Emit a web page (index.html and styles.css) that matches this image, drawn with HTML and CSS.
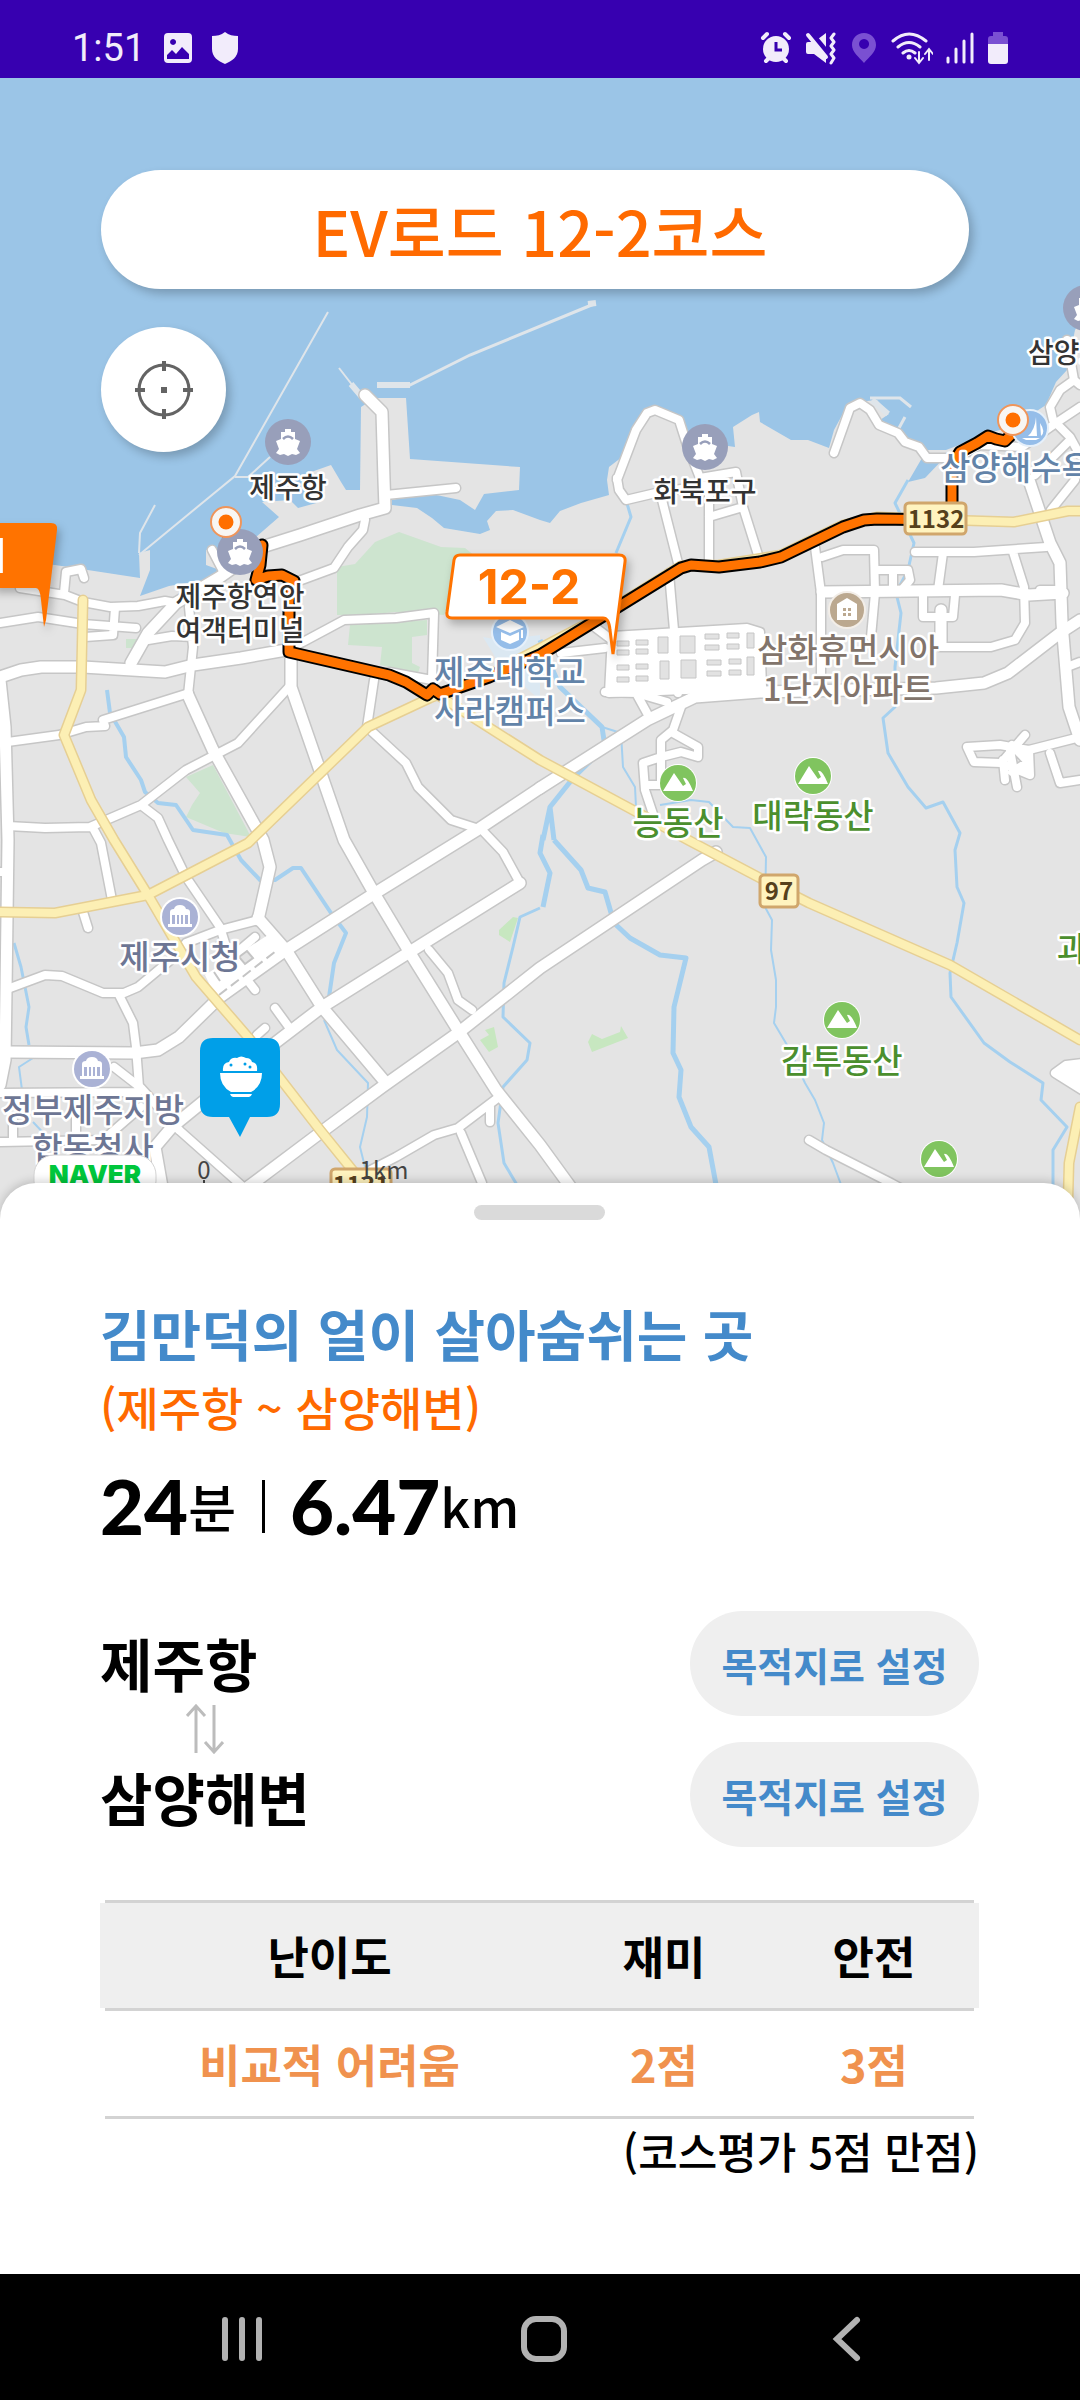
FILE: index.html
```html
<!DOCTYPE html>
<html lang="ko">
<head>
<meta charset="utf-8">
<meta name="viewport" content="width=device-width, initial-scale=1">
<title>EV로드 12-2코스</title>
<link rel="stylesheet" href="styles.css">
</head>
<body>
<div class="status-bar">
  <div class="status-group status-left">
    <span class="clock">1:51</span>
    <svg width="30" height="32" viewBox="0 0 30 32"><path fill="currentColor" fill-rule="evenodd" d="M5 1h20a4 4 0 0 1 4 4v22a4 4 0 0 1-4 4H5a4 4 0 0 1-4-4V5a4 4 0 0 1 4-4zM4 27h22v-5l-7-7-6 7-4-4-5 5zM10 7a3 3 0 1 0 .1 0z"/></svg>
    <svg width="28" height="34" viewBox="0 0 28 34"><path fill="currentColor" d="M14 1c4 3 8 4 13 4v13c0 8-6 12-13 15C7 30 1 26 1 18V5c5 0 9-1 13-4z"/></svg>
  </div>
  <div class="status-group status-right">
    <svg width="32" height="34" viewBox="0 0 32 34"><circle cx="16" cy="18" r="13" fill="currentColor"/><g fill="none" stroke="currentColor" stroke-width="4" stroke-linecap="round"><path d="M3 7l4-4M29 7l-4-4M6 30l4-4M26 30l-4-4"/></g><path d="M16 11v8h6" fill="none" stroke="#3700b0" stroke-width="3"/></svg>
    <svg width="32" height="34" viewBox="0 0 32 34"><path fill="currentColor" d="M3 11h6L21 2v30L9 23H3q-2 0-2-2v-8q0-2 2-2z"/><path d="M5 2l19 23" stroke="#3700b0" stroke-width="7"/><path d="M3 4l18 22" stroke="currentColor" stroke-width="4" stroke-linecap="round"/><path d="M29 3l-3 4 3 4-3 4 3 4-3 4 3 4-3 5" fill="none" stroke="currentColor" stroke-width="3" stroke-linejoin="round" stroke-linecap="round"/></svg>
    <svg width="28" height="34" viewBox="0 0 28 34"><path fill="#7a50d2" fill-rule="evenodd" d="M14 2c7 0 12 5 12 12 0 7-7 12-12 18C9 26 2 21 2 14 2 7 7 2 14 2zM14 8a5 5 0 1 0 .1 0z"/></svg>
    <svg width="42" height="34" viewBox="0 0 42 34"><g fill="none" stroke="currentColor" stroke-width="3" stroke-linecap="round"><path d="M2 10q16-14 33 0M7 16q11-9 22 0M12 22q6-5 12 0"/><path d="M28 21v10M24 27l4 5 4-5M38 29V19M34 23l4-5 4 5" stroke-width="2"/></g><circle cx="18" cy="26" r="2.500" fill="currentColor"/></svg>
    <svg width="28" height="32" viewBox="0 0 28 32"><path d="M2 26v4M10 17v13M18 9v21M26 2v28" stroke="currentColor" stroke-width="3" stroke-linecap="round"/></svg>
    <svg width="22" height="34" viewBox="0 0 22 34"><path fill="#7a50d2" d="M6 1h10v4h2q3 0 3 3v7H1V8q0-3 3-3h2z"/><path fill="currentColor" d="M1 13h20v17q0 3-3 3H4q-3 0-3-3z"/></svg>
  </div>
</div>

<main class="screen">
<section class="map-area" aria-label="지도">
<svg class="map" viewBox="0 78 1080 1147">
  <defs>
    <g id="roads-wide">
      <path d="M365 395L382 412 384 480 385 508 360 515 300 535 262 547 220 577 176 603 148 633 131 663"/>
      <path d="M0 677L21 670 41 667 83 667 165 672 193 665 241 658 286 650"/>
      <path d="M0 680L5 727 8 840 6 990 5 1060 0 1085"/>
      <path d="M188 695L213 750 263 840 270 867 258 920M291 653V687L344 840 374 893 410 953 458 1030 496 1090 540 1145 580 1200"/>
      <path d="M540 788L477 830 372 895 286 950 220 997 179 1037 158 1050 134 1053 8 1052"/>
      <path d="M540 788L647 720 695 697 760 692 936 688 984 683 1008 673 1060 633 1080 620"/>
      <path d="M716 852L702 860 540 968 458 1033 382 1087 320 1133 248 1187 230 1200"/>
      <path d="M258 918L286 950 322 1007 386 1083M520 883L424 943 322 1007 275 1043 172 1127 155 1147 162 1187"/>
      <path d="M1029 480L1050 543 1060 563 1062 623 1069 707 1080 740M822 592L1001 590 1029 595 1063 593M941 610V645"/>
    </g>
    <g id="roads-mid">
      <path d="M20 588L65 595 83 602 110 607 138 606 165 601 176 603M64 593L66 572 81 569 84 578"/>
      <path d="M0 623L38 617 83 624 136 628M115 608L113 635 85 637M148 640L172 636 193 637M189 607L193 647 188 695"/>
      <path d="M286 650L303 642 344 620 396 618 434 613 432 680 389 672M0 743L59 735 86 727 105 726 103 720 189 693"/>
      <path d="M289 687L238 743 186 770 141 805 90 827 45 828 8 826M141 805L158 818 168 840 186 877 220 927 225 943M93 828L101 843 112 900M83 912L88 928"/>
      <path d="M374 680L367 727 406 763 418 787 451 820 482 830 503 852 520 883"/>
      <path d="M119 995L133 1023 136 1047 139 1087M10 988L45 975 62 976 103 993 124 993 138 987 179 953 186 943 220 930 258 920"/>
      <path d="M179 1130L241 1185 255 1198M499 1097L458 1128 434 1135 396 1157 365 1173M461 1133L482 1183M490 1107V1122M429 950L448 973 458 1000 472 1010"/>
      <path d="M114 1067L141 1088 179 1130M0 1142L103 1140 141 1107M0 1093L138 1092M13 1140V1120M76 1100V1140M275 1008L291 1030M257 1035L265 1028M255 937L222 965M0 872H8M220 945L255 990"/>
      <path d="M386 495L456 488M365 520L363 530 348 547 334 568 296 582M212 550L224 573"/>
      <path d="M617 480L636 430 647 413 655 410 679 420 687 445 700 478 736 472 743 507 759 558M617 478L619 490 626 500 660 492 709 485V560M709 517L743 507M660 492L679 567M669 573L674 630 678 693"/>
      <path d="M561 653L605 648M592 625L612 640M605 692L636 693 667 702M636 693L647 713M681 707L673 730 661 740V757L643 763 645 790 654 817M673 733L698 747V757L681 752 661 757M645 785H661V757"/>
      <path d="M815 547L821 593V677M822 557L843 550H874L875 593 871 637M876 570H908L910 580 900 592M893 570V592M915 552H974L1046 547M943 553L938 590M923 595V617H953L955 595M1013 552L1024 587 1025 623 1015 640 991 647H940M1075 480L1051 510M1067 667L1080 662M1040 590H1060"/>
      <path d="M1080 737L1029 750 1000 745 967 747 974 762 1001 763 1025 735M1029 750L1030 775 1001 763M1017 787L1010 750M1005 780L1003 760M1050 753L1060 783 1080 780M1012 745L1028 762 1012 772"/>
      <path d="M834 453L850 408 860 403 870 410 879 425 898 433 905 442 919 447 927 458 957 458 980 445 1022 447 1056 423 1080 407M1067 340L1074 380 1060 390 1050 407 1053 420 1070 437 1080 455M1050 460L1070 440M1035 475L1050 460M1074 380L1080 385"/>
      <path d="M809 1140L826 1150 891 1183 915 1196"/>
    </g>
    <g id="roads-national">
      <path d="M83 600L81 690 64 735 91 800 114 840 148 895 196 977 248 1037 320 1130 358 1177"/>
      <path d="M0 912L55 913 148 895 248 843 368 727 430 698 489 675 592 621 681 566 719 565 781 555 843 525 877 517 950 520 1014 522 1068 511 1080 511"/>
      <path d="M430 690L540 760 657 823 688 840 760 878 809 903 950 965 1080 1040M1080 1107L1069 1163 1068 1200"/>
    </g>
    <path id="route" d="M226 530L240 560 262 545 260 565 256 580 268 576 282 575 294 581 289 600V652L389 675 406 682 427 695 433 689 440 694 489 677 540 655 592 623 681 568 691 565 719 567 760 562 781 557 843 527 864 520 877 519 952 520V465L960 452 977 443 988 436 996 439 1005 441 1013 433"/>
    <g id="icon-ship">
      <circle r="23" fill="#989fba"/>
      <path fill="#fff" d="M-3-10v-3h6v3h4v7l5 2-3 8 3 4-4 2-4-1-4 2-4-2-4 1-4-2 3-4-3-8 5-2v-7z"/>
      <path d="M-5-3q5-5 10 0" fill="none" stroke="#989fba" stroke-width="2.500"/>
    </g>
    <g id="icon-hill">
      <circle r="19" fill="#fff"/><circle r="18" fill="#80c45f"/>
      <path fill="#fff" d="M-15 8L-4-10 5 3 8 1 5-5Q9-7 15 8z"/>
    </g>
    <g id="icon-hall">
      <circle r="20" fill="#fff"/><circle r="18" fill="#aab2d5"/>
      <path fill="#fff" d="M-10-5q0-3 4-3 1-4 6-4t6 4q4 0 4 3v3h-20zM-12 7h24v3h-24z"/>
      <path d="M-9-3V8M-4-3V8M0-3V8M4-3V8M9-3V8" stroke="#fff" stroke-width="2"/>
    </g>
    <g id="icon-endpoint">
      <circle r="15" fill="#f8f6f3" stroke="#f0955a" stroke-width="2"/><circle r="7.500" fill="#ff6f00"/>
    </g>
  </defs>

  <rect y="78" width="1080" height="1147" fill="#9bc5e7"/>
  <path fill="#e4e4e4" d="M0 560L55 565 140 578 139 553 150 550V570L140 596 169 586 206 580 225 572 206 565V550L228 547 256 537 279 517 262 502 290 500 298 508 320 502 300 476 331 465 341 482 346 490H360L361 407 375 398H406L410 459 520 467 519 490 484 494 475 510 460 500 427 493 392 500V505L417 508 432 518 444 528 480 534 490 530 487 521 496 511 513 510 540 520 550 523 560 511 581 503 609 495 607 480 609 467 622 457 630 440 647 413 680 420 687 440 735 447 733 427 752 415 759 412 760 422 791 440 808 440 829 448 834 430 846 408 857 402 877 400 889 414 880 420 898 428 905 440 922 450 946 450 967 442 988 433 1012 427 1046 405 1056 382 1067 370 1075 330 1080 322V1225H0z"/>
  <g fill="none" stroke="#dfe5ea" stroke-width="2">
    <path d="M328 312L235 476 139 555M270 457L248 477H235M155 505L140 533 139 553M339 368L360 395"/>
    <path d="M377 386H408L470 355 594 304M870 398H900L911 407M905 417L899 428" stroke-width="3"/>
    <path d="M351 384L362 397M377 385H410M588 304L596 303M872 400L888 414" stroke-width="6"/>
  </g>
  <path fill="#9bc5e7" d="M922 458L946 456 925 478 908 482z"/>

  <g fill="#cde4cf">
    <path d="M337 567L355 564 375 542 399 532 441 547 465 548 480 560 444 615 396 612 362 615H337zM350 625L427 620V635L412 637V663L420 667 418 673 380 665 382 647 348 645zM186 777L213 765 251 837 224 833 186 817 192 805 200 793zM126 639h12v9h-12z"/>
    <path fill="#c7e7c0" d="M499 930L513 917 518 918 510 942 499 935zM480 1040L489 1035 485 1030 494 1027 498 1047 489 1052zM588 1042L592 1034 602 1039 620 1032 621 1026 628 1038 592 1052z"/>
  </g>
  <path fill="#dbe8f2" d="M483 637L500 640 540 635V700L500 665z"/>

  <g fill="none" stroke="#a5d0ef" stroke-linejoin="round">
    <path stroke-width="3" d="M626 500L631 517 616 553M908 480L895 503 914 543 908 570 896 593 901 613 895 667V707L883 718 888 753 908 787 926 808 943 802 960 833 955 850 957 887 964 903 957 943 950 973 951 997 984 1043 1010 1062 1043 1083 1041 1100 1067 1127 1053 1150V1190"/>
    <path stroke-width="5" d="M540 640L560 687 602 727 605 747 574 777 550 807 543 840M554 840L581 870 588 888 605 892 614 923 630 938 660 955 686 958 674 1007 673 1053 681 1070 679 1097 691 1127 709 1147 717 1190M543 835L540 853 550 873 543 907M550 807L554 840"/>
    <path stroke-width="2" d="M602 727L621 733 623 767 635 787 636 807M660 805L691 800 709 802 733 827 750 828 766 857 765 907 772 920 771 950 776 980V1007L774 1023 790 1050 805 1083 815 1100 824 1123 822 1140 833 1163 843 1190"/>
    <path stroke-width="4" d="M107 690L110 713 124 737 126 757 141 780 145 792 158 803 176 805 193 830 227 835 241 860 260 880 275 880 293 868 301 868 331 913 346 933 334 963 329 997"/>
    <path stroke-width="2" d="M324 1020L337 1050 368 1083 367 1117 360 1147 365 1167M33 1058L19 1067 22 1090M33 1122L50 1140"/>
    <path stroke-width="3" d="M14 943L21 967 29 1007 26 1027 29 1045M540 908L520 917 513 947 504 983 503 1017 530 1043 527 1060 503 1087 498 1123 504 1163 520 1190"/>
  </g>

  <g fill="none" stroke-linecap="round" stroke-linejoin="round">
    <use href="#roads-mid" class="road-mid-edge"/>
    <use href="#roads-wide" class="road-wide-edge"/>
    <path class="road-mid-edge" fill="#fff" d="M612 636L747 628 760 632 762 687 609 693z"/>
    <path class="road-mid-edge" fill="#fff" d="M1055 1073L1066 1065 1090 1062V1095z"/>
    <use href="#roads-mid" class="road-mid"/>
    <use href="#roads-wide" class="road-wide"/>
    <path class="road-mid" fill="#fff" d="M612 636L747 628 760 632 762 687 609 693zM1055 1073L1066 1065 1090 1062V1095z"/>
  </g>
  <path fill="#e2e2e2" stroke="#c6c6c6" d="M617 641h12v5h-12zM636 640h12v5h-12zM617 650h12v5h-12zM636 649h12v5h-12zM617 665h12v5h-12zM636 664h12v5h-12zM617 677h12v5h-12zM636 676h12v5h-12zM658 637h10v16h-10zM680 636h15v17h-15zM660 661h9v18h-9zM681 660h15v18h-15zM705 634h14v5h-14zM727 633h12v5h-12zM705 645h14v5h-14zM727 644h12v5h-12zM707 660h14v5h-14zM729 659h12v5h-12zM707 671h14v5h-14zM729 670h12v5h-12zM747 633h7v15h-7zM747 657h7v18h-7z"/>
  <path fill="#fff" d="M205 975L268 935 282 952 218 1002z"/>
  <path d="M219 995L276 951" stroke="#c4c4c4" stroke-width="2" stroke-dasharray="10 5"/>
  <path d="M239 957l8-6 6 7-8 6zM214 972l6 9" fill="#e4e4e4" stroke="#c4c4c4" stroke-width="2"/>
  <g fill="none" stroke-linecap="round" stroke-linejoin="round">
    <use href="#roads-national" stroke="#e6cf93" stroke-width="11"/>
    <use href="#roads-national" stroke="#fcefb4" stroke-width="8"/>
    <use href="#route" stroke="#000" stroke-width="13"/>
    <use href="#route" stroke="#ff7300" stroke-width="9"/>
  </g>

  <use href="#icon-ship" x="288" y="442"/>
  <use href="#icon-ship" x="240" y="552"/>
  <use href="#icon-ship" x="705" y="447"/>
  <use href="#icon-ship" x="1086" y="308"/>
  <use href="#icon-hill" x="678" y="783"/>
  <use href="#icon-hill" x="813" y="776"/>
  <use href="#icon-hill" x="842" y="1020"/>
  <use href="#icon-hill" x="939" y="1159"/>
  <use href="#icon-hall" x="180" y="917"/>
  <use href="#icon-hall" x="92" y="1069"/>
  <circle cx="1030" cy="428" r="18" fill="#95bde9" stroke="#e6f0fa" stroke-width="2"/>
  <path fill="#fff" d="M1036 417l1 19h-9q7-6 8-19zM1040 423q6 9 1 13zM1022 438h18l-4 2h-10z"/>
  <circle cx="510" cy="632" r="18" fill="#95bde9" stroke="#e6f0fa" stroke-width="2"/>
  <path fill="#fff" d="M510 620l14 7-14 6-14-6zM501 632l9 4 9-4v8l-9 4-9-4zM521 630h2v8h-2z"/>
  <circle cx="847" cy="610" r="18" fill="#bba88f" stroke="#f3eee8" stroke-width="2"/>
  <path fill="#fff" d="M847 598l10 6v16h-20v-16z"/>
  <path fill="#bba88f" d="M843 608h3v3h-3zM848 608h3v3h-3zM843 613h3v3h-3zM848 613h3v3h-3z"/>

  <g class="place place-port">
    <text x="288" y="498">제주항</text>
    <text x="240" y="607">제주항연안</text>
    <text x="240" y="641">여객터미널</text>
    <text x="705" y="502">화북포구</text>
    <text x="1028" y="363" class="from-start">삼양포구</text>
  </g>
  <g class="place place-blue">
    <text x="940" y="480" class="from-start">삼양해수욕장</text>
    <text x="510" y="684">제주대학교</text>
    <text x="510" y="723">사라캠퍼스</text>
  </g>
  <g class="place place-brown">
    <text x="848" y="662">삼화휴먼시아</text>
    <text x="848" y="701">1단지아파트</text>
  </g>
  <g class="place place-green">
    <text x="678" y="835">능동산</text>
    <text x="813" y="828">대락동산</text>
    <text x="842" y="1073">감투동산</text>
    <text x="1057" y="961" class="from-start">과</text>
  </g>
  <g class="place place-slate">
    <text x="180" y="969">제주시청</text>
    <text x="93" y="1122">정부제주지방</text>
    <text x="93" y="1161">합동청사</text>
  </g>

  <g class="road-sign">
    <rect x="905" y="503" width="61" height="31" rx="4"/><text x="936" y="528">1132</text>
    <rect x="760" y="875" width="38" height="32" rx="4"/><text x="779" y="900">97</text>
    <rect x="331" y="1169" width="60" height="32" rx="4"/><text x="361" y="1194">1131</text>
  </g>

  <use href="#icon-endpoint" x="226" y="522"/>
  <use href="#icon-endpoint" x="1013" y="420"/>

  <g class="flag">
    <path fill="#ff7300" d="M-8 523H51q7 0 6 7L46 620 44 627 41 600Q40 588 36 588H-8z"/>
    <text x="6" y="573" fill="#fff" text-anchor="end">1</text>
    <path fill="#fff" stroke="#ff7300" stroke-width="3" d="M460 555H619q7 0 6 7L613 654 610 630Q609 618 603 618H452q-6 0-5-6L454 560q1-5 6-5z"/>
    <text x="529" y="604" fill="#ff7300" text-anchor="middle">12-2</text>
  </g>

  <path fill="#009fe8" d="M213 1038h54q13 0 13 13v53q0 13-13 13h-17l-10 20-11-20h-16q-13 0-13-13v-53q0-13 13-13z"/>
  <path fill="#fff" d="M223 1071q-1-8 6-9 2-5 8-4 4-3 9 0 5 0 6 4 6 1 5 9zM220 1073h42q0 13-11 19h-20q-11-6-11-19zM230 1094h22q-1 3-3 3h-16q-2 0-3-3z"/>
  <g fill="#009fe8"><circle cx="231" cy="1065" r="1.500"/><circle cx="245" cy="1064" r="1.500"/><circle cx="250" cy="1067" r="1.500"/></g>

  <rect x="34" y="1155" width="122" height="46" rx="20" fill="#fff" stroke="#d5d5d5"/>
  <text x="95" y="1184" class="naver">NAVER</text>
  <g class="scale"><text x="204" y="1179">0</text><text x="384" y="1179">1km</text><path d="M204 1180v12" stroke="#444" stroke-width="2"/></g>
</svg>
<header class="map-overlay">
  <h1 class="course-title">EV로드 12-2코스</h1>
  <button class="locate" type="button" aria-label="현재 위치">
    <svg width="60" height="60" viewBox="0 0 60 60" fill="none" stroke="#646464" stroke-width="3"><circle cx="30" cy="30" r="25"/><path d="M30 1v10M30 49v10M1 30h10M49 30h10" stroke-width="4"/><path d="M27 27h6v6h-6z" fill="#646464" stroke="none"/></svg>
  </button>
</header>
</section>

<section class="sheet">
  <div class="handle"></div>
  <h2 class="sheet-title">김만덕의 얼이 살아숨쉬는 곳</h2>
  <p class="section-name">(제주항 ~ 삼양해변)</p>
  <div class="stats">
    <strong>24</strong><span>분</span>
    <i class="stats-divider"></i>
    <strong>6.47</strong><span>km</span>
  </div>
  <div class="stops">
    <div class="stop-names">
      <p>제주항</p>
      <svg class="swap" width="38" height="50" viewBox="0 0 38 50" fill="none" stroke="#bcbcbc" stroke-width="3"><path d="M10 49V3M1 12l9-10 9 10M28 1v46M19 38l9 10 9-10"/></svg>
      <p>삼양해변</p>
    </div>
    <div class="stop-actions">
      <button type="button">목적지로 설정</button>
      <button type="button">목적지로 설정</button>
    </div>
  </div>
  <table class="rating">
    <thead><tr><th scope="col" class="wide">난이도</th><th scope="col">재미</th><th scope="col">안전</th></tr></thead>
    <tbody><tr><td>비교적 어려움</td><td>2점</td><td>3점</td></tr></tbody>
  </table>
  <p class="note">(코스평가 5점 만점)</p>
</section>
</main>

<nav class="system-nav">
  <button type="button" aria-label="최근 앱"><svg width="48" height="48" viewBox="0 0 48 48" stroke="#b2b2b2" stroke-width="6" stroke-linecap="round"><path d="M7 5v38M24 5v38M41 5v38"/></svg></button>
  <button type="button" aria-label="홈"><svg width="48" height="48" viewBox="0 0 48 48" fill="none" stroke="#b2b2b2" stroke-width="6"><rect x="4" y="4" width="40" height="40" rx="12"/></svg></button>
  <button type="button" aria-label="뒤로"><svg width="48" height="48" viewBox="0 0 48 48" fill="none" stroke="#b2b2b2" stroke-width="6" stroke-linecap="round"><path d="M34 5L14 24l20 19"/></svg></button>
</nav>
</body>
</html>
```
FILE: styles.css
```css
* { box-sizing: border-box; }

body {
  margin: 0;
  min-height: 100vh;
  display: flex;
  flex-direction: column;
  background: #fff;
  color: #000;
  font-family: "Noto Sans CJK KR", "Noto Sans", sans-serif;
}

h1, h2, p { margin: 0; }

button {
  border: 0;
  padding: 0;
  font: inherit;
  display: flex;
  align-items: center;
  justify-content: center;
}

svg { display: block; }

.status-bar {
  height: 78px;
  padding: 18px 71px 0 72px;
  display: flex;
  align-items: center;
  justify-content: space-between;
  background: #3700b0;
  color: #f2ecfb;
}

.status-group { display: flex; align-items: center; }
.status-left { gap: 18px; }
.status-right { gap: 13px; }
.clock { font-family: Roboto, sans-serif; font-size: 38px; line-height: 48px; }

.screen { flex: 1; display: flex; flex-direction: column; }

.map-area { position: relative; background: #9bc5e7; overflow: hidden; }
.map { width: 100%; height: auto; }

.map-overlay {
  position: absolute;
  inset: 92px 111px auto 101px;
  display: flex;
  flex-direction: column;
  gap: 38px;
}

.course-title {
  height: 119px;
  padding-left: 10px;
  border-radius: 60px;
  background: #fff;
  box-shadow: 4px 5px 10px rgba(0, 0, 0, .22);
  color: #ff6a00;
  font-size: 63px;
  font-weight: 500;
  line-height: 120px;
  text-align: center;
}

.locate {
  width: 125px;
  height: 125px;
  border-radius: 50%;
  background: #fff;
  box-shadow: 4px 5px 10px rgba(0, 0, 0, .22);
}

.road-mid { stroke: #fff; stroke-width: 8px; }
.road-mid-edge { stroke: #c6c6c6; stroke-width: 11px; }
.road-wide { stroke: #fff; stroke-width: 11px; }
.road-wide-edge { stroke: #c6c6c6; stroke-width: 14px; }

.place {
  font-size: 33px;
  font-weight: 500;
  text-anchor: middle;
  paint-order: stroke;
  stroke: #fff;
  stroke-width: 5px;
  stroke-linejoin: round;
}
.place .from-start { text-anchor: start; }
.place-port { font-size: 28px; fill: #333; }
.place-blue { fill: #6283a8; }
.place-brown { fill: #82746b; }
.place-green { fill: #4b8f2e; }
.place-slate { fill: #6d7694; }

.road-sign rect { fill: #fff3bf; stroke: #d0a66c; stroke-width: 3px; }
.road-sign text { font-size: 24px; font-weight: 700; fill: #56401c; text-anchor: middle; }

.flag { filter: drop-shadow(3px 5px 4px rgba(0, 0, 0, .25)); }
.flag text { font-family: Inter, sans-serif; font-size: 48px; font-weight: 700; }

.naver { font-family: Inter, sans-serif; font-size: 26px; font-weight: 900; fill: #00c73c; text-anchor: middle; }
.scale text { font-size: 24px; fill: #444; text-anchor: middle; }

.sheet {
  position: relative;
  flex: 1;
  margin-top: -42px;
  padding: 22px 101px 60px 100px;
  display: flex;
  flex-direction: column;
  border-radius: 36px 36px 0 0;
  background: #fff;
  box-shadow: 0 -2px 10px rgba(0, 0, 0, .18);
}

.handle {
  width: 131px;
  height: 15px;
  margin-bottom: 72px;
  align-self: center;
  border-radius: 8px;
  background: #dadada;
}

.sheet-title { color: #448aca; font-size: 55px; font-weight: 700; line-height: 80px; }
.section-name { color: #ff6a00; font-size: 46px; font-weight: 500; line-height: 68px; }

.stats { height: 76px; margin-top: 28px; display: flex; align-items: center; }
.stats strong { font-family: Lato, sans-serif; font-size: 76px; font-weight: 900; line-height: 76px; }
.stats span { font-size: 52px; font-weight: 500; line-height: 76px; }
.stats-divider { width: 3px; height: 53px; margin: 0 25px 0 26px; background: #000; }

.stops { margin-top: 67px; display: flex; justify-content: space-between; align-items: center; }
.stop-names { font-size: 57px; font-weight: 700; line-height: 80px; }
.swap { margin: 2px 0 2px 86px; }
.stop-actions { display: flex; flex-direction: column; gap: 26px; }
.stop-actions button {
  width: 289px;
  height: 105px;
  border-radius: 53px;
  background: #efefef;
  color: #448aca;
  font-size: 39px;
  font-weight: 700;
}

.rating {
  width: 100%;
  margin-top: 53px;
  padding: 3px 0;
  border-spacing: 0;
  table-layout: fixed;
  font-size: 45px;
  font-weight: 700;
  text-align: center;
  background:
    linear-gradient(#d3d3d3, #d3d3d3) center top / calc(100% - 10px) 3px no-repeat,
    linear-gradient(#d3d3d3, #d3d3d3) center bottom / calc(100% - 10px) 3px no-repeat;
}
.rating th, .rating td { width: 210px; height: 105px; padding: 0; }
.rating .wide { width: auto; }
.rating thead tr { background: #efefef; }
.rating tbody tr { background: linear-gradient(#d3d3d3, #d3d3d3) center top / calc(100% - 10px) 3px no-repeat; color: #f0924e; }
.rating td { height: 108px; padding-top: 3px; }

.note { font-size: 43px; font-weight: 500; line-height: 62px; text-align: right; }

.system-nav {
  height: 126px;
  display: flex;
  align-items: center;
  justify-content: space-around;
  padding: 4px 82px 0 91px;
  background: #000;
}
.system-nav button { width: 48px; height: 48px; background: none; }
```
